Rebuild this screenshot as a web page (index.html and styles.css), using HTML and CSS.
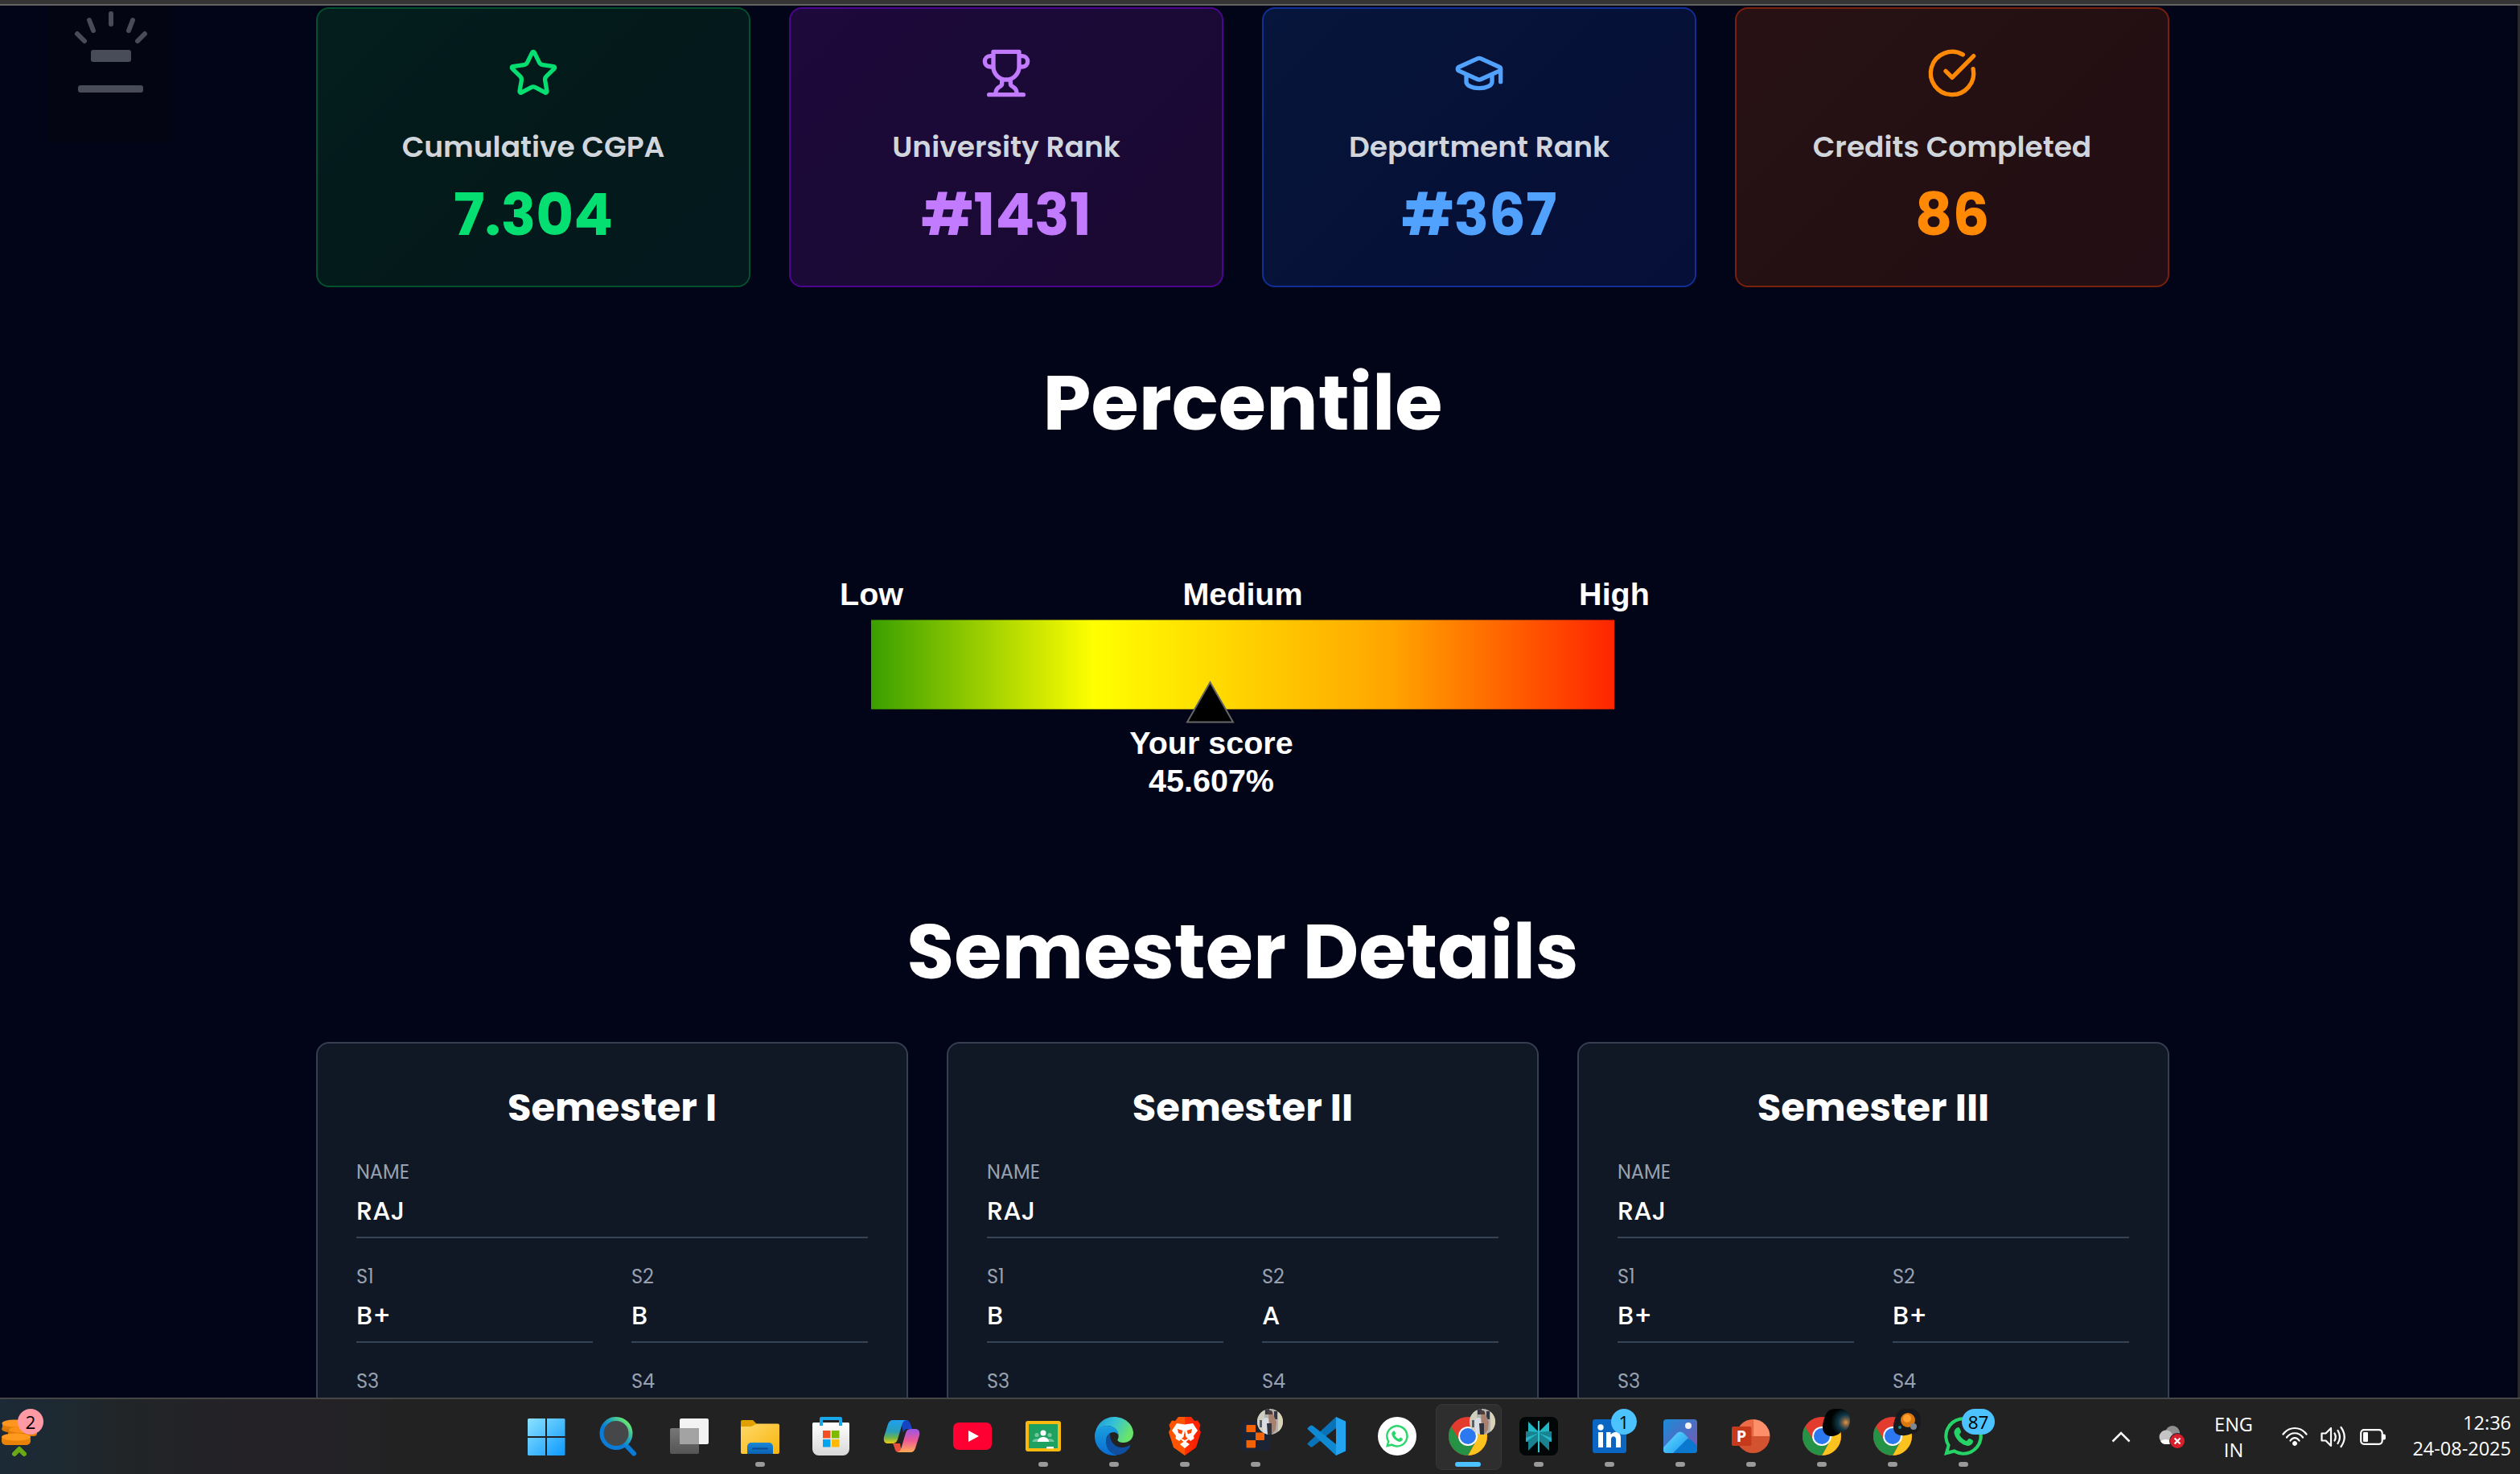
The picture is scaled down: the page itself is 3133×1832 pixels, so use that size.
FILE: index.html
```html
<!DOCTYPE html>
<html lang="en">
<head>
<meta charset="utf-8">
<title>Results</title>
<link rel="stylesheet" href="styles.css">
</head>
<body>
<svg class="defs" width="0" height="0" aria-hidden="true">
  <defs>
    <linearGradient id="g-win" x1="0" y1="0" x2="1" y2="1"><stop offset="0" stop-color="#8be2ff"/><stop offset="1" stop-color="#0d99ff"/></linearGradient>
    <linearGradient id="g-blue" x1="0" y1="0" x2="0" y2="1"><stop offset="0" stop-color="#1b87d6"/><stop offset="1" stop-color="#0a62b4"/></linearGradient>
    <linearGradient id="g-photo" x1="0" y1="0" x2="1" y2="1"><stop offset="0" stop-color="#1590dc"/><stop offset=".5" stop-color="#4a6fc4"/><stop offset="1" stop-color="#8a4fb0"/></linearGradient>
    <linearGradient id="g-hill" x1="0" y1="0" x2="1" y2="1"><stop offset="0" stop-color="#6fe4ff"/><stop offset="1" stop-color="#0f8ff0"/></linearGradient>
    <clipPath id="c-round"><circle cx="24" cy="24" r="24"/></clipPath>
    <clipPath id="c-photo"><rect x="3" y="3" width="42" height="42" rx="4"/></clipPath>
    <symbol id="chrome" viewBox="0 0 48 48">
      <g clip-path="url(#c-round)">
        <rect width="48" height="48" fill="#e33b2e"/>
        <path d="M24 13H48V48H24L34 30Z" fill="#fcc31e"/>
        <path d="M3.200 12L14 30C18 36 28 36 34 30L24 48H0V12Z" fill="#259245"/>
      </g>
      <circle cx="24" cy="24" r="12" fill="#fff"/>
      <circle cx="24" cy="24" r="10" fill="#2b78f0"/>
    </symbol>
  </defs>
</svg>

<div class="browser-edge"></div>

<div class="viewport">
  <aside class="lamp">
    <svg width="155" height="170" viewBox="0 0 155 170" fill="none" stroke="#484b58" stroke-linecap="round">
      <path d="M78 10V23M51 18l5 13M105 18l-5 13M36 35l9 9M120 35l-9 9" stroke-width="6"/>
      <rect x="53" y="55" width="50" height="15" rx="3" fill="#484b58" stroke="none"/>
      <rect x="37" y="99" width="81" height="9" rx="3" fill="#484b58" stroke="none"/>
    </svg>
  </aside>

  <main class="page">
    <section class="stats">
      <article class="stat green">
        <svg class="stat-icon" viewBox="0 0 24 24"><path d="M11.525 2.295a.53.53 0 0 1 .95 0l2.31 4.679a2.123 2.123 0 0 0 1.595 1.16l5.166.756a.53.53 0 0 1 .294.904l-3.736 3.638a2.123 2.123 0 0 0-.611 1.878l.882 5.14a.53.53 0 0 1-.771.56l-4.618-2.428a2.122 2.122 0 0 0-1.973 0L6.396 21.010a.53.53 0 0 1-.77-.56l.881-5.139a2.122 2.122 0 0 0-.611-1.879L2.160 9.795a.53.53 0 0 1 .294-.906l5.165-.755a2.122 2.122 0 0 0 1.597-1.160z"/></svg>
        <h3>Cumulative CGPA</h3>
        <p>7.304</p>
      </article>
      <article class="stat purple">
        <svg class="stat-icon" viewBox="0 0 24 24"><path d="M6 9H4.500a2.500 2.500 0 0 1 0-5H6M18 9h1.500a2.500 2.500 0 0 0 0-5H18M4 22h16M10 14.660V17c0 .55-.47.98-.97 1.210C7.850 18.750 7 20.240 7 22M14 14.660V17c0 .55.47.98.97 1.210C16.150 18.750 17 20.240 17 22M18 2H6v7a6 6 0 0 0 12 0V2Z"/></svg>
        <h3>University Rank</h3>
        <p>#1431</p>
      </article>
      <article class="stat blue">
        <svg class="stat-icon" viewBox="0 0 24 24"><path d="M21.420 10.922a1 1 0 0 0-.019-1.838L12.830 5.180a2 2 0 0 0-1.660 0L2.600 9.080a1 1 0 0 0 0 1.832l8.570 3.908a2 2 0 0 0 1.660 0zM22 10v6M6 12.500V16a6 3 0 0 0 12 0v-3.500"/></svg>
        <h3>Department Rank</h3>
        <p>#367</p>
      </article>
      <article class="stat orange">
        <svg class="stat-icon" viewBox="0 0 24 24"><path d="M21.801 10A10 10 0 1 1 17 3.335M9 11l3 3L22 4"/></svg>
        <h3>Credits Completed</h3>
        <p>86</p>
      </article>
    </section>

    <h2 class="heading percentile-heading">Percentile</h2>
    <svg class="gauge" viewBox="0 0 1100 586">
      <defs>
        <linearGradient id="scale"><stop offset="0" stop-color="#3a9f00"/><stop offset=".3" stop-color="#ffff00"/><stop offset=".7" stop-color="#ffa500"/><stop offset="1" stop-color="#ff2400"/></linearGradient>
      </defs>
      <text x="88.500" y="202.500">Low</text>
      <text x="550" y="202.500">Medium</text>
      <text x="1012" y="202.500">High</text>
      <rect x="88" y="221.500" width="924" height="111" fill="url(#scale)"/>
      <path d="M509.500 299L538 348.500H481Z" fill="#000" stroke="#666" stroke-width="2"/>
      <text x="511" y="388">Your score</text>
      <text x="511" y="435">45.607%</text>
    </svg>

    <h2 class="heading">Semester Details</h2>
    <section class="semesters">
      <article class="semester">
        <h3>Semester I</h3>
        <dl>
          <div class="field wide"><dt>NAME</dt><dd>RAJ</dd></div>
          <div class="field"><dt>S1</dt><dd>B+</dd></div>
          <div class="field"><dt>S2</dt><dd>B</dd></div>
          <div class="field"><dt>S3</dt><dd></dd></div>
          <div class="field"><dt>S4</dt><dd></dd></div>
        </dl>
      </article>
      <article class="semester">
        <h3>Semester II</h3>
        <dl>
          <div class="field wide"><dt>NAME</dt><dd>RAJ</dd></div>
          <div class="field"><dt>S1</dt><dd>B</dd></div>
          <div class="field"><dt>S2</dt><dd>A</dd></div>
          <div class="field"><dt>S3</dt><dd></dd></div>
          <div class="field"><dt>S4</dt><dd></dd></div>
        </dl>
      </article>
      <article class="semester">
        <h3>Semester III</h3>
        <dl>
          <div class="field wide"><dt>NAME</dt><dd>RAJ</dd></div>
          <div class="field"><dt>S1</dt><dd>B+</dd></div>
          <div class="field"><dt>S2</dt><dd>B+</dd></div>
          <div class="field"><dt>S3</dt><dd></dd></div>
          <div class="field"><dt>S4</dt><dd></dd></div>
        </dl>
      </article>
    </section>
  </main>
</div>

<footer class="taskbar">
  <div class="widget">
    <svg width="48" height="60" viewBox="0 0 48 60">
      <ellipse cx="18" cy="25" rx="16" ry="5" fill="#d97706"/><rect x="3" y="17" width="31" height="8" fill="#e27c07"/><ellipse cx="18" cy="18" rx="15.500" ry="4.500" fill="#ff9620"/>
      <rect x="10" y="26" width="36" height="8" rx="4" fill="#e07a05"/><ellipse cx="28" cy="26" rx="17" ry="4" fill="#fb8f17"/>
      <rect x="2" y="33" width="36" height="12" rx="5" fill="#e88208"/><ellipse cx="20" cy="35" rx="18" ry="4.500" fill="#ff9a1f"/>
      <path d="M18 56l6-6 6 6" fill="none" stroke="#69a914" stroke-width="6" stroke-linecap="round" stroke-linejoin="round"/>
    </svg>
    <span class="badge pink">2</span>
  </div>

  <nav class="apps">
    <div class="app"><svg viewBox="0 0 48 48"><path d="M-1 3.500a1.500 1.500 0 0 1 1.500-1.500H21V24H-1ZM23 2H44a1.500 1.500 0 0 1 1.500 1.500V24H23ZM-1 26H21V48H.5a1.500 1.500 0 0 1-1.500-1.500ZM23 26H45.500V46.500a1.500 1.500 0 0 1-1.500 1.500H23Z" fill="url(#g-win)"/></svg></div>
    <div class="app">
      <svg viewBox="0 0 48 48"><defs><linearGradient id="g-ring" x1="0" y1="1" x2="1" y2="0"><stop offset=".4" stop-color="#0a7cd8"/><stop offset=".62" stop-color="#23a5b8"/><stop offset=".9" stop-color="#6bea70"/></linearGradient></defs>
      <path d="M34 36L43 45.500" stroke="#0a7cd8" stroke-width="6" stroke-linecap="round"/><circle cx="21" cy="20.500" r="18" fill="#454748" stroke="url(#g-ring)" stroke-width="5"/></svg>
    </div>
    <div class="app">
      <svg viewBox="0 0 48 48"><defs><linearGradient id="g-gray" x1="0" y1="0" x2="0" y2="1"><stop offset="0" stop-color="#777"/><stop offset="1" stop-color="#555"/></linearGradient></defs>
      <rect x="12" y="2" width="36" height="32" rx="2" fill="#f3f3f3"/><rect x="0" y="14" width="36" height="32" rx="2" fill="url(#g-gray)"/><rect x="12" y="14" width="24" height="20" fill="#a3a3a3"/></svg>
    </div>
    <div class="app running">
      <svg viewBox="0 0 48 48"><defs><linearGradient id="g-folder" x1="0" y1="0" x2="1" y2="1"><stop offset="0" stop-color="#ffd869"/><stop offset="1" stop-color="#f8b50c"/></linearGradient></defs>
      <path d="M0 6a2 2 0 0 1 2-2H15l6 6V16H0Z" fill="#e0a100"/><path d="M0 12H13L20 8.500H46a2 2 0 0 1 2 2V44a2 2 0 0 1-2 2H2a2 2 0 0 1-2-2Z" fill="url(#g-folder)"/><path d="M8 46V37a5 5 0 0 1 5-5H35a5 5 0 0 1 5 5V46Z" fill="url(#g-blue)"/><rect x="14" y="38.500" width="20" height="2" rx="1" fill="#0b4b92"/></svg>
    </div>
    <div class="app">
      <svg viewBox="0 0 48 48"><defs><linearGradient id="g-bag" x1="0" y1="0" x2="0" y2="1"><stop offset="0" stop-color="#fff"/><stop offset="1" stop-color="#d8d8d8"/></linearGradient></defs>
      <path d="M1 8.500a1.500 1.500 0 0 1 1.500-1.500H45.500a1.500 1.500 0 0 1 1.500 1.500V40a8 8 0 0 1-8 8H9a8 8 0 0 1-8-8Z" fill="url(#g-bag)"/><path d="M12 11V2H36V11" fill="none" stroke="#17a7ea" stroke-width="4" stroke-linejoin="round"/>
      <path d="M14 17h9.500v9.500H14Z" fill="#f25022"/><path d="M25 17h9.500v9.500H25Z" fill="#7fba00"/><path d="M14 28h9.500v9.500H14Z" fill="#00a4ef"/><path d="M25 28h9.500v9.500H25Z" fill="#ffb900"/></svg>
    </div>
    <div class="app">
      <svg viewBox="0 0 48 48"><defs>
      <linearGradient id="g-cop1" x1="0" y1="0" x2="0" y2="1"><stop offset="0" stop-color="#1ea0f0"/><stop offset=".5" stop-color="#2c9fb8"/><stop offset=".75" stop-color="#6cb44c"/><stop offset="1" stop-color="#f2cc10"/></linearGradient>
      <linearGradient id="g-cop2" x1="0" y1="0" x2="0" y2="1"><stop offset="0" stop-color="#9a55e8"/><stop offset=".5" stop-color="#ee5a96"/><stop offset="1" stop-color="#ffab55"/></linearGradient></defs>
      <path d="M23 4H30C33 4 34 6 35 9L37 15H32C28 15 27 17 26 20Z" fill="#1644c4"/>
      <path d="M13 33H22L24 44H21C17 44 16 42 15 38Z" fill="#e8503c"/>
      <path d="M13 4H30C26 4 25 8 24 11L19 28C18 31 16 33 12 33H7C3 33 1 30 2 25L7 9C8 6 10 4 13 4Z" fill="url(#g-cop1)"/>
      <path d="M35 44H18C22 44 23 40 24 37L29 20C30 17 32 15 36 15H41C45 15 47 18 46 23L41 39C40 42 38 44 35 44Z" fill="url(#g-cop2)"/></svg>
    </div>
    <div class="app"><svg viewBox="0 0 48 48"><rect y="7" width="48" height="34" rx="7" fill="#ff0033"/><path d="M19 17L32 24L19 31Z" fill="#fff"/></svg></div>
    <div class="app running">
      <svg viewBox="0 0 48 48"><rect x="2" y="5" width="44" height="38" rx="3" fill="#f9b90f"/><rect x="6" y="9" width="36" height="30" fill="#1fa261"/><circle cx="16" cy="22.500" r="2.600" fill="#6fc79b"/><circle cx="32" cy="22.500" r="2.600" fill="#6fc79b"/><path d="M10.500 31c0-5 11-5 11 0ZM26.500 31c0-5 11-5 11 0Z" fill="#6fc79b"/><circle cx="24" cy="20" r="3.500" fill="#fff"/><path d="M17 31c0-8 14-8 14 0Z" fill="#fff"/><rect x="28" y="37" width="9" height="2.500" fill="#fff"/></svg>
    </div>
    <div class="app running">
      <svg viewBox="0 0 48 48"><defs>
      <linearGradient id="g-e1" x1="0" y1="0" x2="1" y2=".4"><stop offset="0" stop-color="#1a93d8"/><stop offset=".5" stop-color="#35c1d8"/><stop offset="1" stop-color="#69e46a"/></linearGradient>
      <linearGradient id="g-e2" x1="0" y1="0" x2="0" y2="1"><stop offset="0" stop-color="#1aa0e0"/><stop offset="1" stop-color="#0a6cd0"/></linearGradient></defs>
      <path d="M0 24C1 10 11 0 24 0C38 0 48 10 48 20C48 28 42 32 36 32C31 32 28 30 28.500 28C31 25 30 12 16 11C8 11 1 17 0 24Z" fill="url(#g-e1)"/>
      <path d="M0 24C0 16 7 11 15 11C25 11 30 17 29 22C26 17 18 18 15 25C12 35 18 45 28 47.700C12 50 0 38 0 24Z" fill="url(#g-e2)"/>
      <path d="M19 20C12 26 12 40 23 46C31 50 41 43 44 37C44 35 43 35 42 36C30 42 18 34 19 20Z" fill="#0f4fa0"/></svg>
    </div>
    <div class="app running">
      <svg viewBox="0 0 48 48"><defs><linearGradient id="g-brave"><stop offset=".5" stop-color="#ff5500"/><stop offset=".5" stop-color="#ff3000"/><stop offset="1" stop-color="#ff1a00"/></linearGradient></defs>
      <path d="M16 0H32L36 5L40 4.500L43.500 10L42 15L44 19L38 38L24 48L10 38L4 19L6 15L4.500 10L8 4.500L12 5Z" fill="url(#g-brave)"/>
      <path d="M14 8L24 9.500L34 8L40 17L35 23.500L35.500 27L31 30L29 28L25.500 31L30 34L24 39L18 34L22.500 31L19 28L17 30L12.500 27L13 23.500L8 17Z" fill="#fff"/>
      <path d="M15 15L21.500 17L20 21.500L16 20ZM33 15L26.500 17L28 21.500L32 20ZM24 17L25.500 25L28 27L24 29L20 27L22.500 25Z" fill="#ff4500"/></svg>
    </div>
    <div class="app running">
      <svg viewBox="0 0 48 48"><rect x="6" y="6" width="36" height="36" rx="3" fill="#1c2333"/><path d="M12.500 11a1 1 0 0 1 1-1H23a1 1 0 0 1 1 1V19H12.500ZM24 19.500H34a1 1 0 0 1 1 1V28a1 1 0 0 1-1 1H24ZM12.500 29H24V37.500a1 1 0 0 1-1 1H13.500a1 1 0 0 1-1-1Z" fill="#f26207"/></svg>
      <svg class="avatar" viewBox="0 0 32 32"><use href="#portrait"/></svg>
    </div>
    <div class="app"><svg viewBox="0 0 48 48"><path d="M1 32.500Q0 33.500 1 34.500L4 37Q5.500 38 7 37L36 14V0Z" fill="#0873b8"/><path d="M1 15.500Q0 14.500 1 13.500L4 11Q5.500 10 7 11L36 34V48Z" fill="#1089d3"/><path d="M36 0L48 5.500V42.500L36 48Z" fill="#23a4f2"/></svg></div>
    <div class="app"><svg viewBox="0 0 48 48"><circle cx="24" cy="24" r="24" fill="#fff"/><use href="#wa" fill="#2bd66b" transform="translate(10 10) scale(.58)"/></svg></div>
    <div class="app active">
      <svg viewBox="0 0 48 48"><use href="#chrome"/></svg>
      <svg class="avatar" viewBox="0 0 32 32"><use href="#portrait"/></svg>
    </div>
    <div class="app running">
      <svg viewBox="0 0 48 48"><rect width="48" height="48" rx="8" fill="#010606"/><path d="M24 19L11 6V18H8V31H11V42L24 29L37 42V31H40V18H37V6Z" fill="#19818f"/><path d="M24 19L11 6V18ZM24 19L37 6V18ZM24 20L8 31V26ZM24 20L40 31V26Z" fill="#22b5c4"/><path d="M24 5V44" stroke="#2cc3d2" stroke-width="2"/></svg>
    </div>
    <div class="app running">
      <svg viewBox="0 0 48 48"><rect x="3" y="3" width="42" height="42" rx="3" fill="#0a66c2"/><circle cx="13" cy="13" r="3.700" fill="#fff"/><path d="M10 19H16V38H10ZM20 19H25.500V22C29 17 38 17 38 26V38H32V28C32 23 26 23 26 28V38H20Z" fill="#fff"/></svg>
      <span class="badge">1</span>
    </div>
    <div class="app running">
      <svg viewBox="0 0 48 48"><g clip-path="url(#c-photo)"><rect width="48" height="48" fill="url(#g-photo)"/><path d="M12 48L30 29Q34 26 38 29L48 39V48Z" fill="#0b78d0"/><path d="M1 40L20 20Q24 17 28 20L34 26L12 48H3Z" fill="url(#g-hill)"/></g><circle cx="34" cy="11" r="4" fill="#f2f0f5"/></svg>
    </div>
    <div class="app running">
      <svg viewBox="0 0 48 48"><path d="M26.500 3A21 21 0 0 0 5.500 24H26.500Z" fill="#ed6c47"/><path d="M26.500 3A21 21 0 0 1 47.500 24H26.500Z" fill="#ff8f6b"/><path d="M5.500 24A21 21 0 0 0 47.500 24Z" fill="#d35230"/><rect y="12" width="24.500" height="24" rx="2" fill="#c43a1a"/><text class="ppt" x="12" y="31">P</text></svg>
    </div>
    <div class="app running">
      <svg viewBox="0 0 48 48"><use href="#chrome"/></svg>
      <svg class="avatar" viewBox="0 0 32 32"><defs><radialGradient id="g-eye" cx=".85" cy=".5" r=".55"><stop offset="0" stop-color="#e8963c"/><stop offset=".25" stop-color="#6a5a48"/><stop offset=".5" stop-color="#0f3a4a"/><stop offset="1" stop-color="#010303"/></radialGradient></defs><path d="M14 0H20C28 0 33 6 33 14C33 22 29 28 22 28C20 32 15 34 10 34C4 34 -1 30 -1 23C-1 18 0 14 2 10C3 4 8 0 14 0Z" fill="url(#g-eye)"/></svg>
    </div>
    <div class="app running">
      <svg viewBox="0 0 48 48"><use href="#chrome"/></svg>
      <svg class="avatar" viewBox="0 0 32 32"><path d="M14 0H20C28 0 33 6 33 14C33 22 31 29 25 30C20 31 15 34 10 33C4 33 -1 30 -1 23C-1 18 0 14 2 10C3 4 8 0 14 0Z" fill="#17191f"/><circle cx="17" cy="14" r="9" fill="#d9780f"/><circle cx="16" cy="12" r="5" fill="#ff9f2e"/><circle cx="24" cy="22" r="4" fill="#7d8894"/><circle cx="7" cy="23" r="2" fill="#1d8a8c"/></svg>
    </div>
    <div class="app running">
      <svg viewBox="0 0 48 48"><use href="#wa" fill="#25d366"/></svg>
      <span class="badge wide-badge">87</span>
    </div>
  </nav>

  <div class="tray">
    <svg width="24" height="14" viewBox="0 0 24 14" fill="none" stroke="#fff" stroke-width="2.500"><path d="M1.500 12.500L12 2L22.500 12.500"/></svg>
    <svg class="cloud" width="34" height="30" viewBox="0 0 34 30">
      <circle cx="17" cy="10" r="9" fill="#909090"/><circle cx="9" cy="15" r="8.500" fill="#c4c4c4"/><path d="M2 20Q8 16 15 20V24H8Q4 24 2 20Z" fill="#fff"/>
      <circle cx="23" cy="20" r="10" fill="#222"/><circle cx="23" cy="20" r="9" fill="#d91f2b"/><path d="M19.500 16.500l7 7M26.500 16.500l-7 7" stroke="#fff" stroke-width="2.200"/>
    </svg>
    <div class="lang"><span>ENG</span><span>IN</span></div>
    <div class="status">
      <svg width="32" height="25" viewBox="0 0 32 25" fill="none" stroke="#fff" stroke-width="2.200" stroke-linecap="round"><path d="M1.500 9.500C9-.5 23-.5 30.500 9.500M6 13.500C11 6.500 21 6.500 26 13.500M10.500 17.500C13.500 13 18.500 13 21.500 17.500"/><circle cx="16" cy="21" r="2.500" fill="#fff" stroke-width="1"/></svg>
      <svg width="33" height="28" viewBox="0 0 33 28" fill="none" stroke="#fff" stroke-width="2.200" stroke-linecap="round" stroke-linejoin="round"><path d="M1.500 9.500H6.500L13 3V25L6.500 18.500H1.500ZM17.500 9.500Q20 14 17.500 18.500M21.500 6Q26.500 14 21.500 22M25.500 2Q34 14 25.500 26"/></svg>
      <svg width="33" height="20" viewBox="0 0 33 20"><rect x="1.200" y="1.200" width="26.500" height="17.600" rx="4" fill="none" stroke="#fff" stroke-width="2.200"/><rect x="4" y="4" width="6" height="12" rx="1" fill="#fff"/><path d="M28 6.500h2q2 0 2 2v3q0 2-2 2H28Z" fill="#fff"/></svg>
    </div>
    <div class="clock"><span>12:36</span><span>24-08-2025</span></div>
  </div>
</footer>

<svg class="defs" width="0" height="0" aria-hidden="true">
  <defs>
    <clipPath id="c-avatar"><circle cx="16" cy="16" r="16"/></clipPath>
    <g id="portrait"><g clip-path="url(#c-avatar)">
      <rect width="32" height="32" fill="#b4b2aa"/><rect width="9" height="32" fill="#cfcfc0"/><rect x="26" width="6" height="32" fill="#d8d2b8"/><path d="M10 0h5v7h-5ZM21 3h4v10h-4Z" fill="#303848"/><path d="M5 16Q9 9 14 12L16 32H8Z" fill="#dadce4"/><path d="M14 4q5-3 6 3l4 9-1 10-5 6-3-12Z" fill="#a8806f"/><path d="M13 3q4-3 6 1v3h-6Z" fill="#4b3d3b"/><path d="M12 18h6v14h-5Z" fill="#30323c"/><path d="M3 14h3v9H3Z" fill="#5a5d62"/>
    </g></g>
    <g id="wa">
      <path fill-rule="evenodd" d="M0 48L3.400 35.800A23.800 23.800 0 1 1 12.400 44.700ZM6 42L13 40.300A19.600 19.600 0 1 0 7.700 35Z"/>
      <path d="M17.500 13C19 13 19.500 14 21 18C21.500 19.500 20 20.500 19 22C22 27 24.500 28.500 28 30C29.500 28.500 30.500 26.500 32 27C35 28.500 36 29 36 30C36 34 32 36 29 36C22 35 14 28 12.500 20C12 17 15 13 17.500 13Z"/>
    </g>
  </defs>
</svg>
</body>
</html>
```
FILE: styles.css
```css
* { box-sizing: border-box; }

body {
  margin: 0;
  height: 1832px;
  overflow: hidden;
  display: flex;
  flex-direction: column;
  background: #020417;
  color: #fff;
  font-family: "Poppins", "Inter", sans-serif;
}

h2, h3, p, dl, dt, dd { margin: 0; }
svg { display: block; overflow: visible; }
.defs { position: absolute; }

.browser-edge {
  flex: none;
  height: 7px;
  background: #343434;
  border-bottom: 2px solid #636363;
}

.viewport {
  position: relative;
  flex: 1;
  min-height: 0;
  overflow: hidden;
  border-right: 3px solid #2b2b2b;
}

.lamp {
  position: absolute;
  left: 60px;
  top: 0;
  width: 155px;
  height: 170px;
  background: #030513;
}

.page {
  width: 2304px;
  margin-left: 393px;
  padding-top: 2px;
}

/* Summary cards */
.stats {
  display: grid;
  grid-template-columns: repeat(4, 1fr);
  gap: 48px;
}

.stat {
  height: 348px;
  padding: 48px;
  border: 2px solid;
  border-radius: 16px;
  display: flex;
  flex-direction: column;
  align-items: center;
}

.stat-icon {
  width: 64px;
  height: 64px;
  margin-bottom: 32px;
  fill: none;
  stroke: currentColor;
  stroke-width: 2;
  stroke-linecap: round;
  stroke-linejoin: round;
}

.stat h3 {
  font-size: 36px;
  line-height: 56px;
  font-weight: 600;
  color: #d1d5dc;
  white-space: nowrap;
}

.stat p {
  margin-top: 16px;
  font-size: 72px;
  line-height: 80px;
  font-weight: 700;
}

.green { color: #05df72; border-color: #03502d; background: linear-gradient(135deg, #041e1e, #03191a 50%, #03191e); }
.purple { color: #c27aff; border-color: #4d0590; background: linear-gradient(135deg, #1d0a3b, #1b0936 50%, #1b0933); }
.blue { color: #51a2ff; border-color: #122f97; background: linear-gradient(135deg, #07163c, #061137 50%, #060f38); }
.orange { color: #ff8904; border-color: #7a210c; background: linear-gradient(135deg, #271114, #241013 50%, #220e14); }

/* Percentile gauge */
.heading {
  font-size: 96px;
  line-height: 96px;
  font-weight: 700;
  text-align: center;
}

.percentile-heading { margin-top: 96px; }

.gauge {
  width: 1100px;
  height: 586px;
  margin: 0 auto;
  font-family: "Liberation Sans", Arial, sans-serif;
  font-size: 39.500px;
  font-weight: 700;
  text-anchor: middle;
}

.gauge text { fill: #fff; }

/* Semester cards */
.semesters {
  display: grid;
  grid-template-columns: repeat(3, 1fr);
  gap: 48px;
  margin-top: 64px;
}

.semester {
  padding: 48px;
  border: 2px solid #344052;
  border-radius: 16px;
  background: #101725;
}

.semester h3 {
  font-size: 48px;
  line-height: 64px;
  font-weight: 700;
  text-align: center;
}

.semester dl {
  display: grid;
  grid-template-columns: 1fr 1fr;
  gap: 32px 48px;
  margin-top: 32px;
}

.field {
  height: 98px;
  border-bottom: 2px solid #364354;
}

.wide { grid-column: span 2; }

.field dt {
  font-size: 24px;
  line-height: 32px;
  color: #99a1af;
}

.field dd {
  margin-top: 8px;
  font-size: 32px;
  line-height: 48px;
  font-weight: 500;
}

/* Taskbar */
.taskbar {
  flex: none;
  display: flex;
  height: 95px;
  border-top: 2px solid #464646;
  background: linear-gradient(90deg, #1c2a37 0, #1e2930 90px, #212527 150px, #242227 300px, #242227 400px, #222 520px);
  font-family: "Open Sans", "Noto Sans", sans-serif;
}

.widget {
  position: relative;
  width: 637px;
  padding-top: 12px;
}

.apps { display: flex; }

.app {
  position: relative;
  width: 88px;
  padding: 22px 20px 0;
}

.app > svg { width: 48px; height: 48px; }

.running::after,
.active::after {
  content: "";
  position: absolute;
  left: 38px;
  top: 78px;
  width: 12px;
  height: 6px;
  border-radius: 3px;
  background: #9a9a9a;
}

.active::after {
  left: 28px;
  width: 32px;
  background: #4cc2ff;
}

.active::before {
  content: "";
  position: absolute;
  left: 4px;
  top: 6px;
  width: 80px;
  height: 80px;
  border: 1px solid #383838;
  border-radius: 8px;
  background: #2e2e2e;
}

.active > svg { position: relative; }

.app > .avatar {
  position: absolute;
  left: 46px;
  top: 12px;
  width: 32px;
  height: 32px;
}

.badge {
  position: absolute;
  left: 46px;
  top: 12px;
  width: 32px;
  height: 32px;
  border-radius: 16px;
  background: #4cc2ff;
  color: #000;
  font-size: 22.500px;
  line-height: 33px;
  text-align: center;
}

.wide-badge { left: 42px; width: 41px; }
.badge.pink { left: 22px; background: #ff99a4; }

.ppt {
  fill: #fff;
  font-size: 20px;
  font-weight: 700;
  text-anchor: middle;
}

.tray {
  flex: 1;
  display: flex;
  align-items: center;
  padding-left: 140px;
  padding-right: 11px;
  font-size: 23.500px;
  line-height: 32px;
}

.cloud { margin-left: 35px; }

.lang,
.clock {
  display: flex;
  flex-direction: column;
}

.lang {
  width: 50px;
  margin-left: 34px;
  align-items: center;
}

.status {
  display: flex;
  align-items: center;
  gap: 16px;
  margin-left: 35px;
}

.clock {
  margin-left: auto;
  padding-bottom: 4px;
  align-items: flex-end;
}
```
